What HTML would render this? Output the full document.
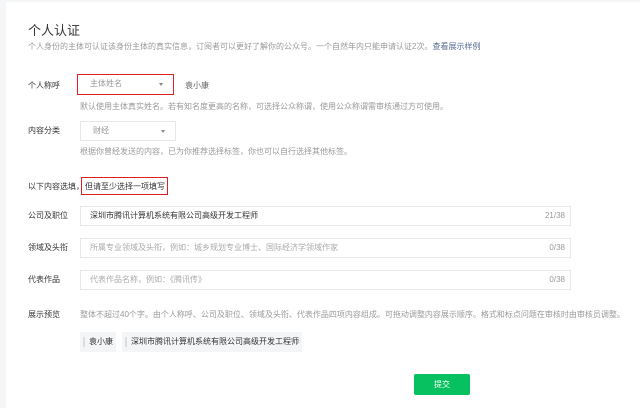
<!DOCTYPE html>
<html><head><meta charset="utf-8"><style>
*{margin:0;padding:0;box-sizing:border-box}
body{width:640px;height:408px;background:#f5f6f7;font-family:"Liberation Sans","Noto Sans CJK SC",sans-serif;position:relative;overflow:hidden}
.card{position:absolute;left:6px;top:2px;right:0;bottom:0;background:#fff}
.a{position:absolute;white-space:nowrap;font-size:8px;line-height:12px}
.lbl{color:#353535;left:28px}
.hint{color:#9a9a9a;left:80px}
.sel{position:absolute;border:1px solid #e4e8eb;height:20px;background:#fff;font-size:8px;color:#9a9a9a;line-height:18px;padding-left:12px}
.sel:after{content:"";position:absolute;right:10px;top:8px;border-left:2.5px solid transparent;border-right:2.5px solid transparent;border-top:3px solid #888}
.inp{position:absolute;left:80px;width:491px;height:20px;border:1px solid #e4e8eb;font-size:8px;line-height:18px;padding-left:9px;color:#aaa;white-space:nowrap}
.inp span{position:absolute;right:5px;top:0;color:#999}
.chip{position:absolute;top:332px;height:20px;background:#f4f5f6;font-size:8px;line-height:20px;color:#353535;padding-left:9px;white-space:nowrap}
.chip:before{content:"";position:absolute;left:3px;top:5px;width:2px;height:10px;background:#ddd}
</style></head><body>
<div class="card"></div>
<div class="a" style="left:28px;top:23px;font-size:13px;line-height:16px;color:#353535">个人认证</div>
<div class="a" style="left:28px;top:41px;color:#9a9a9a">个人身份的主体可认证该身份主体的真实信息，订阅者可以更好了解你的公众号。一个自然年内只能申请认证2次。<span style="color:#576b95">查看展示样例</span></div>
<div class="a lbl" style="top:80px">个人称呼</div>
<div class="sel" style="left:77px;top:74px;width:97px;height:21px;border:1.5px solid #e02020">主体姓名</div>
<div class="a" style="left:185px;top:80px;color:#666">袁小康</div>
<div class="a hint" style="top:101px">默认使用主体真实姓名。若有知名度更高的名称，可选择公众称谓，使用公众称谓需审核通过方可使用。</div>
<div class="a lbl" style="top:125px">内容分类</div>
<div class="sel" style="left:80px;top:121px;width:96px">财经</div>
<div class="a hint" style="top:146px">根据你曾经发送的内容，已为你推荐选择标签，你也可以自行选择其他标签。</div>
<div class="a lbl" style="top:181px">以下内容选填，</div>
<div style="position:absolute;left:81px;top:177px;width:87px;height:18px;border:1.5px solid #e02020"></div>
<div class="a" style="left:85px;top:181px;color:#353535">但请至少选择一项填写</div>
<div class="a lbl" style="top:210px">公司及职位</div>
<div class="inp" style="top:206px;color:#353535">深圳市腾讯计算机系统有限公司高级开发工程师<span>21/38</span></div>
<div class="a lbl" style="top:242px">领域及头衔</div>
<div class="inp" style="top:238px">所属专业领域及头衔，例如：城乡规划专业博士、国际经济学领域作家<span>0/38</span></div>
<div class="a lbl" style="top:274px">代表作品</div>
<div class="inp" style="top:270px">代表作品名称，例如：《腾讯传》<span>0/38</span></div>
<div class="a lbl" style="top:309px">展示预览</div>
<div class="a hint" style="top:309px">整体不超过40个字。由个人称呼、公司及职位、领域及头衔、代表作品四项内容组成。可拖动调整内容展示顺序。格式和标点问题在审核时由审核员调整。</div>
<div class="chip" style="left:80px;width:36px">袁小康</div>
<div class="chip" style="left:122px;width:180px">深圳市腾讯计算机系统有限公司高级开发工程师</div>
<div style="position:absolute;left:414px;top:374px;width:56px;height:21px;background:#07c160;border-radius:2px;color:#fff;font-size:8px;line-height:21px;text-align:center">提交</div>
</body></html>
